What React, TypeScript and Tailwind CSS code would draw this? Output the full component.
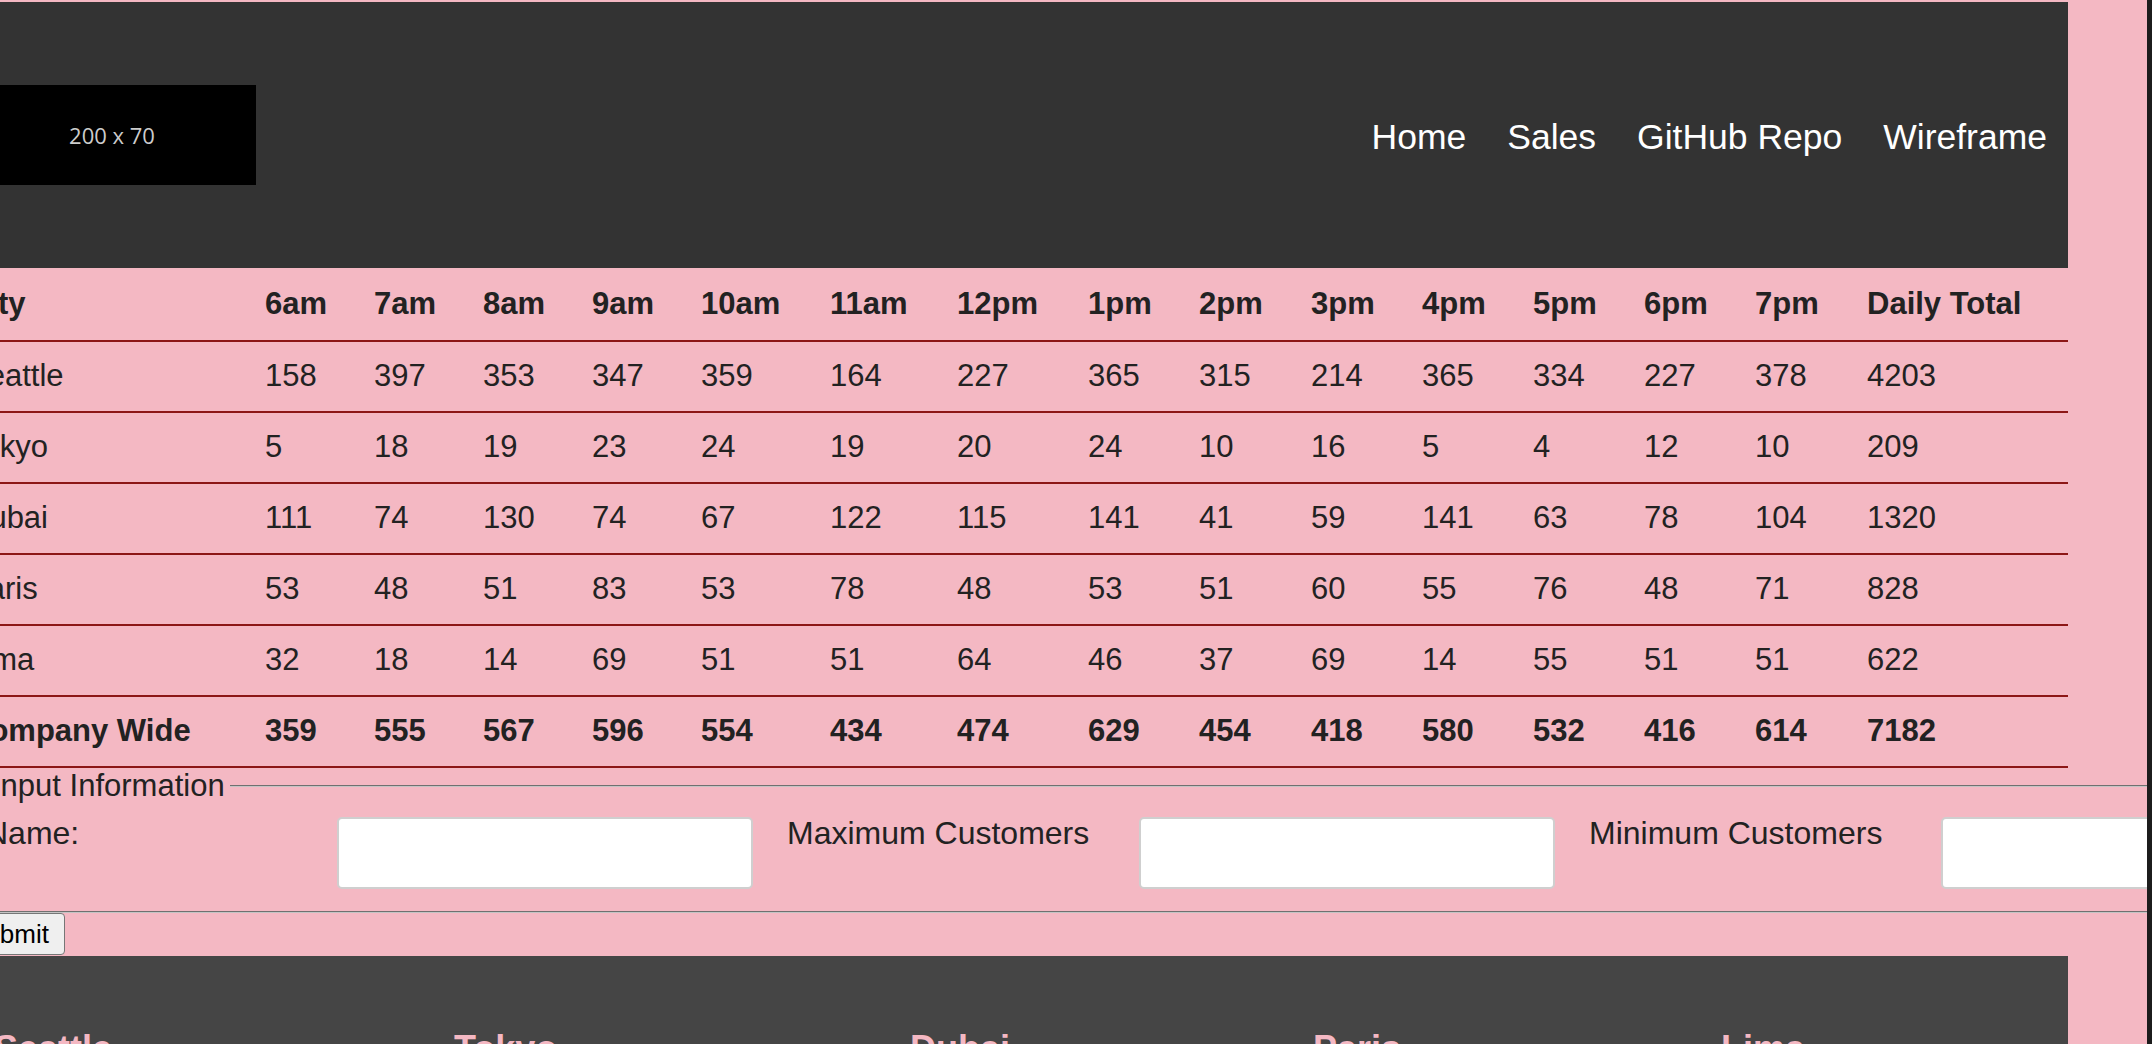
const hours = ['6am', '7am', '8am', '9am', '10am', '11am', '12pm', '1pm', '2pm', '3pm', '4pm', '5pm', '6pm', '7pm'];

const stores: [string, number[]][] = [
  ['Seattle', [158, 397, 353, 347, 359, 164, 227, 365, 315, 214, 365, 334, 227, 378, 4203]],
  ['Tokyo', [5, 18, 19, 23, 24, 19, 20, 24, 10, 16, 5, 4, 12, 10, 209]],
  ['Dubai', [111, 74, 130, 74, 67, 122, 115, 141, 41, 59, 141, 63, 78, 104, 1320]],
  ['Paris', [53, 48, 51, 83, 53, 78, 48, 53, 51, 60, 55, 76, 48, 71, 828]],
  ['Lima', [32, 18, 14, 69, 51, 51, 64, 46, 37, 69, 14, 55, 51, 51, 622]],
];

const totals = [359, 555, 567, 596, 554, 434, 474, 629, 454, 418, 580, 532, 416, 614, 7182];

const colWidths = [
  'w-[298px]', 'w-[109px]', 'w-[109px]', 'w-[109px]', 'w-[109px]', 'w-[129px]', 'w-[127px]', 'w-[131px]',
  'w-[111px]', 'w-[112px]', 'w-[111px]', 'w-[111px]', 'w-[111px]', 'w-[111px]', 'w-[112px]', 'w-[201px]',
];

const fields = ['Name:', 'Maximum Customers', 'Minimum Customers', 'Average Cookies'];

const footerCities = [
  { name: 'Seattle', w: 'w-[460px]' },
  { name: 'Tokyo', w: 'w-[456px]' },
  { name: 'Dubai', w: 'w-[403px]' },
  { name: 'Paris', w: 'w-[408px]' },
  { name: 'Lima', w: 'w-[400px]' },
];

function Header() {
  return (
    <header className="h-[266px] bg-[#333333] flex items-center justify-between pl-[16px] pr-[21px]">
      <div className="w-[288px] h-[100px] bg-black flex items-center justify-center">
        <span className="font-['Open_Sans',sans-serif] text-[22px] text-[#cccccc]">200 x 70</span>
      </div>
      <nav className="flex items-center gap-[41px] pt-[5px] text-[35.5px] text-white leading-none">
        <a href="#">Home</a>
        <a href="#">Sales</a>
        <a href="#">GitHub Repo</a>
        <a href="#">Wireframe</a>
      </nav>
    </header>
  );
}

function SalesTable() {
  const cell = 'p-0 text-left border-b-2 border-[#8c1616]';
  return (
    <table className="ml-[15px] w-[2101px] table-fixed text-[31px] text-[#222222]">
      <colgroup>
        {colWidths.map((w, i) => (
          <col key={i} className={w} />
        ))}
      </colgroup>
      <thead>
        <tr className="h-[73px]">
          <th className={cell + ' font-bold'}>City</th>
          {hours.map((h) => (
            <th key={h} className={cell + ' font-bold'}>{h}</th>
          ))}
          <th className={cell + ' font-bold'}>Daily Total</th>
        </tr>
      </thead>
      <tbody>
        {stores.map(([city, nums]) => (
          <tr key={city} className="h-[71px]">
            <td className={cell}>{city}</td>
            {nums.map((n, i) => (
              <td key={i} className={cell}>{n}</td>
            ))}
          </tr>
        ))}
        <tr className="h-[71px]">
          <td className={cell + ' font-bold'}>Company Wide</td>
          {totals.map((n, i) => (
            <td key={i} className={cell + ' font-bold'}>{n}</td>
          ))}
        </tr>
      </tbody>
    </table>
  );
}

function StoreForm() {
  return (
    <form>
      <fieldset className="w-max border-2 [border-style:groove] border-[#c4c4c4] pl-[31px] pr-[20px] pt-[13px] pb-[22px] text-[#222222]">
        <legend className="pl-[7px] pr-[5px] text-[31px] leading-[36px]">Input Information</legend>
        <div className="flex items-start">
          {fields.map((f) => (
            <div key={f} className="flex items-start mr-[34px]">
              <label className="w-[352px] text-[32px] leading-[32px]">{f}</label>
              <input
                type="text"
                className="w-[416px] h-[72px] bg-white border-2 border-[#cfcfcf] rounded-[5px]"
              />
            </div>
          ))}
        </div>
      </fieldset>
      <button
        type="button"
        className="mb-[1px] px-[15px] py-[5px] text-[26px] leading-[30px] text-black bg-[#efefef] border border-[#767676] rounded-[4px]"
      >
        Submit
      </button>
    </form>
  );
}

function Footer() {
  return (
    <footer className="h-[300px] bg-[#454545] pt-[72px] pl-[42px] flex">
      {footerCities.map((c) => (
        <div key={c.name} className={c.w + ' shrink-0'}>
          <h2 className="text-[36px] leading-[42px] font-bold text-[#f4b8c3]">{c.name}</h2>
        </div>
      ))}
    </footer>
  );
}

export default function App() {
  return (
    <div className="w-[2152px] h-[1044px] overflow-hidden flex bg-[#f4b8c3] font-['Liberation_Sans',Arial,sans-serif]">
      <div className="w-[2147px] shrink-0 pt-[2px] overflow-hidden">
        <div className="ml-[-48px] w-[2116px]">
          <Header />
          <SalesTable />
          <StoreForm />
          <Footer />
        </div>
      </div>
      <div className="w-[5px] shrink-0 bg-[#1c1c1c]" />
    </div>
  );
}
